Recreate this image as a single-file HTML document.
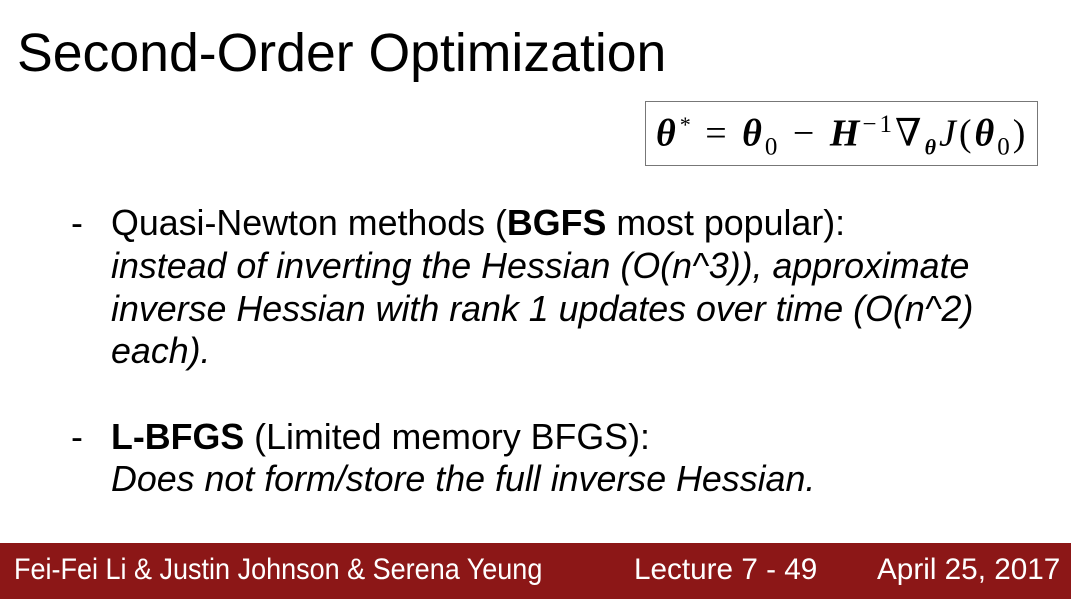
<!DOCTYPE html>
<html><head><meta charset="utf-8"><style>
body{margin:0;width:1071px;height:599px;background:#fff;position:relative;overflow:hidden;font-family:"Liberation Sans",Arial,sans-serif;color:#000}
.a{position:absolute;white-space:nowrap;line-height:1}
.t{left:17px;top:27px;font-size:53.6px}
.l{left:111px;font-size:35.8px}
.d{left:71px;font-size:35.8px}
i{font-style:italic}
.box{position:absolute;left:645px;top:101px;width:393px;height:65px;border:1px solid #777;box-sizing:border-box}
.f{left:656px;top:112px;font-family:"Liberation Serif","DejaVu Serif",serif;font-size:38px;font-weight:bold;font-style:italic;letter-spacing:3px}
.foot{position:absolute;left:0;top:543px;width:1071px;height:56px;background:#8c1717;color:#fff}
.foot .a{top:12px;font-size:30px;transform-origin:0 0}
</style></head><body>
<div class="a t">Second-Order Optimization</div>
<div class="box"></div>
<div class="a f">θ<sup style="font-size:22px;font-weight:normal">*</sup> <span style="font-weight:normal;font-style:normal">=</span> θ<sub style="font-size:25px;font-weight:normal;font-style:normal">0</sub> <span style="font-weight:normal;font-style:normal">−</span> H<sup style="font-size:25px;font-weight:normal;font-style:normal">−1</sup><span style="font-weight:normal;font-style:normal">∇</span><sub style="font-size:22px">θ</sub><span style="font-weight:normal">J</span><span style="font-weight:normal;font-style:normal">(</span>θ<sub style="font-size:25px;font-weight:normal;font-style:normal">0</sub><span style="font-weight:normal;font-style:normal">)</span></div>
<div class="a d" style="top:206px">-</div>
<div class="a l" style="top:206px">Quasi-Newton methods (<b>BGFS</b> most popular):</div>
<div class="a l" style="top:249px"><i>instead of inverting the Hessian (O(n^3)), approximate</i></div>
<div class="a l" style="top:292px"><i>inverse Hessian with rank 1 updates over time (O(n^2)</i></div>
<div class="a l" style="top:334px"><i>each).</i></div>
<div class="a d" style="top:420px">-</div>
<div class="a l" style="top:420px"><b>L-BFGS</b> (Limited memory BFGS):</div>
<div class="a l" style="top:462px"><i>Does not form/store the full inverse Hessian.</i></div>
<div class="foot">
<div class="a" style="left:14px;transform:scaleX(0.9)">Fei-Fei Li &amp; Justin Johnson &amp; Serena Yeung</div>
<div class="a" style="left:634px;transform:scaleX(0.99)">Lecture 7 - 49</div>
<div class="a" style="left:877px;transform:scaleX(0.99)">April 25, 2017</div>
</div>
</body></html>
